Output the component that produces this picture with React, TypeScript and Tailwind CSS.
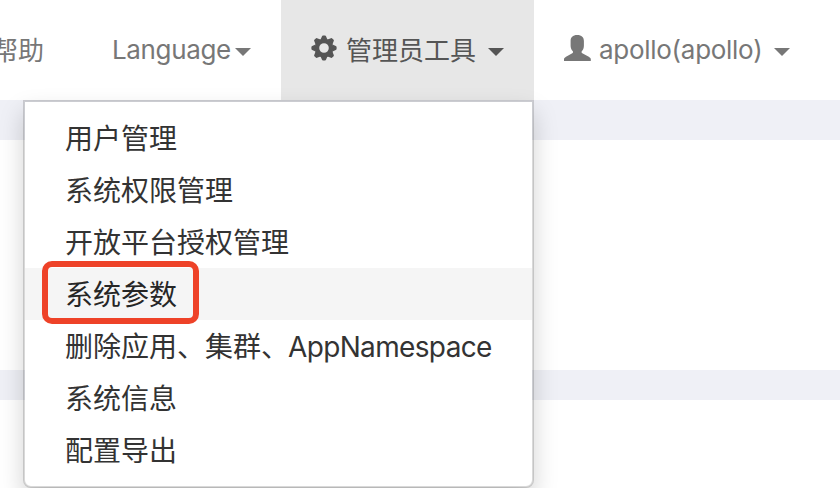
import React from "react";

const menuItems = [
  { label: "用户管理" },
  { label: "系统权限管理" },
  { label: "开放平台授权管理" },
  { label: "系统参数", active: true },
  { label: "删除应用、集群、", latin: "AppNamespace" },
  { label: "系统信息" },
  { label: "配置导出" },
];

const teeth = [0, 45, 90, 135, 180, 225, 270, 315];

function Caret({ className }: { className: string }) {
  return (
    <span
      className={`h-0 w-0 shrink-0 border-x-8 border-t-8 border-x-transparent border-t-current ${className}`}
    />
  );
}

function Cog() {
  return (
    <svg className="-mt-1 h-[26px] w-[26px] shrink-0" viewBox="-13 -13 26 26" fill="currentColor">
      <circle r="7.1" fill="none" stroke="currentColor" strokeWidth="4.6" />
      {teeth.map((angle) => (
        <path
          key={angle}
          transform={`rotate(${angle})`}
          d="M-3.4 -8.5 L-2 -11.8 Q-1.7 -12.6 -1 -12.6 H1 Q1.7 -12.6 2 -11.8 L3.4 -8.5Z"
        />
      ))}
    </svg>
  );
}

function Person() {
  return (
    <svg className="-mt-1 h-[26px] w-[28px] shrink-0" viewBox="0 0 28 26" fill="currentColor">
      <path d="M14.2 0C9.7 0 7.6 2.4 7.6 6v4.8c0 2.2.8 4 2 5.2.7.8.6 1.7-.3 2.2L3 21.7C1.6 22.6 1 23.2 1 24.3V26h26.8v-1.7c0-1.1-.6-1.7-2-2.6l-6.5-3.5c-.9-.5-1-1.4-.3-2.2 1.2-1.2 1.9-3 1.9-5.2V6c0-3.6-2.2-6-6.7-6Z" />
    </svg>
  );
}

export default function App() {
  return (
    <div className="relative h-[488px] w-[840px] overflow-hidden bg-white font-[Inter,'Noto_Sans_CJK_SC',sans-serif] text-[#333]">
      <nav className="flex h-[100px] items-center whitespace-nowrap text-[26px] text-[#777]">
        <span className="-ml-[9px] w-[121px] shrink-0 pl-px">帮助</span>
        <div className="flex w-[169px] shrink-0 items-center">
          <span className="-mt-px w-[123px] tracking-[-0.35px]">Language</span>
          <Caret className="mt-[4px]" />
        </div>
        <div className="flex h-full w-[253px] shrink-0 items-center bg-[#e7e7e7] pl-[30px] text-[#555]">
          <Cog />
          <span className="ml-[9px] w-[142px]">管理员工具</span>
          <Caret className="mt-[4px]" />
        </div>
        <div className="flex items-center pl-[29px]">
          <Person />
          <span className="-mt-px ml-[8px] w-[175px] tracking-[-0.28px]">apollo(apollo)</span>
          <Caret className="mt-[4px]" />
        </div>
      </nav>
      <div className="h-10 bg-[#eff0f6]" />
      <div className="h-[230px]" />
      <div className="h-[30px] bg-[#eff0f6]" />
      <ul className="absolute left-[23px] top-[100px] h-[388px] w-[511px] rounded-b-lg border-2 border-black/15 bg-white bg-clip-padding py-[10px] text-[28px] leading-[40px] shadow-[0_12px_24px_rgba(0,0,0,0.175)]">
        {menuItems.map((item) => (
          <li
            key={item.label}
            className={`relative h-[52px] whitespace-nowrap px-10 pt-[7px] ${item.active ? "bg-[#f5f5f5] text-[#262626]" : ""}`}
          >
            {item.label}
            {item.latin && <span className="-ml-px tracking-[-0.65px]">{item.latin}</span>}
            {item.active && (
              <span className="absolute -top-[7px] left-[17px] h-[63px] w-[157px] rounded-[10px] border-[6px] border-[#ee4228]" />
            )}
          </li>
        ))}
      </ul>
    </div>
  );
}
